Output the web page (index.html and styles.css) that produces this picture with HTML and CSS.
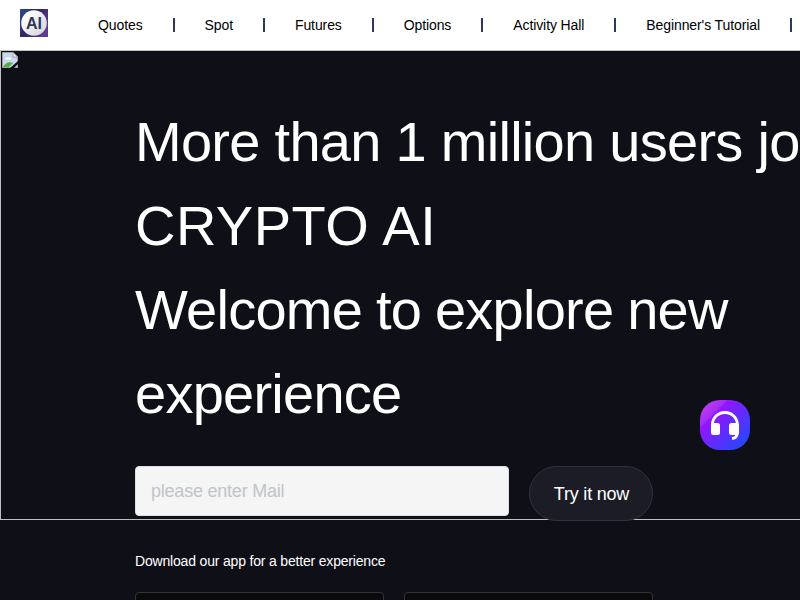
FILE: index.html
```
<!DOCTYPE html>
<html lang="en">
<head>
    <meta charset="UTF-8">
    <meta name="viewport" content="width=device-width, initial-scale=1.0">
    <title>CRYPTO AI</title>
    <link rel="stylesheet" href="styles.css">
</head>
<body>
    <header class="header">
        <svg class="logo" viewBox="0 0 28 28">
            <defs>
                <linearGradient id="logoBg" x1="0" y1="0" x2="1" y2="0.6">
                    <stop offset="0" stop-color="#2b4a94"/>
                    <stop offset="0.5" stop-color="#30265f"/>
                    <stop offset="1" stop-color="#5b3a9a"/>
                </linearGradient>
                <linearGradient id="logoDisc" x1="0" y1="0" x2="1" y2="1">
                    <stop offset="0.2" stop-color="#ffffff"/>
                    <stop offset="1" stop-color="#cfcfd6"/>
                </linearGradient>
            </defs>
            <rect width="28" height="28" fill="url(#logoBg)"/>
            <circle cx="14" cy="14" r="12.8" fill="url(#logoDisc)"/>
            <text class="logo-text" x="14" y="19.8" text-anchor="middle">AI</text>
        </svg>
        <nav class="nav">
            <a class="nav-item">Quotes</a>
            <a class="nav-item">Spot</a>
            <a class="nav-item">Futures</a>
            <a class="nav-item">Options</a>
            <a class="nav-item">Activity Hall</a>
            <a class="nav-item">Beginner's Tutorial</a>
        </nav>
    </header>

    <main class="hero">
        <div class="banner">
            <svg class="banner-icon" viewBox="0 0 16 16">
                <path d="M0.5 0.5H11L15.5 5V15.5H0.5Z" fill="#c6d8f5" stroke="#a0a0a0"/>
                <path d="M11 0.5V5H15.5Z" fill="#fff" stroke="#a0a0a0"/>
                <path d="M3 7.5a2 2 0 0 1 3-2a2 2 0 0 1 3 2Z" fill="#fff"/>
                <path d="M1 15C3 11 7 9 11 11L7 15Z" fill="#53b13e"/>
                <path d="M8 16L16 9V12L12 16Z" fill="#0f0f18"/>
            </svg>
        </div>

        <div class="content">
            <h1 class="title">More than 1 million users join<br><span class="brand">CRYPTO AI</span></h1>
            <h1 class="title welcome">Welcome to explore new<br>experience</h1>

            <div class="form">
                <input class="mail" type="text" placeholder="please enter Mail">
                <button class="try">Try it now</button>
            </div>

            <p class="download">Download our app for a better experience</p>
            <div class="apps">
                <div class="app"></div>
                <div class="app"></div>
            </div>
        </div>
    </main>

    <svg class="service" viewBox="0 0 50 50">
        <defs>
            <linearGradient id="serviceBg" x1="0.1" y1="0.1" x2="0.9" y2="0.9">
                <stop offset="0" stop-color="#bd3df2"/>
                <stop offset="0.2" stop-color="#a62cf5"/>
                <stop offset="0.24" stop-color="#9315ff"/>
                <stop offset="1" stop-color="#2448ff"/>
            </linearGradient>
        </defs>
        <rect width="50" height="50" rx="20" fill="url(#serviceBg)"/>
        <path d="M12.400 26V24.800a12.500 12.300 0 0 1 25 0V32Q37.500 38 32 38.500" fill="none" stroke="#fff" stroke-width="2.800"/>
        <rect x="11" y="23" width="9" height="12" rx="2.500" fill="#fff"/>
        <rect x="29" y="23" width="9.900" height="12" rx="2.500" fill="#fff"/>
    </svg>
</body>
</html>
```

FILE: styles.css
```
* {
    box-sizing: border-box;
}
body {
    margin: 0;
    height: 600px;
    overflow: hidden;
    background: #0f0f18;
    color: #fff;
    font-family: "Liberation Sans", Arial, sans-serif;
}
.header {
    display: flex;
    align-items: center;
    height: 50px;
    padding-left: 20px;
    background: #fff;
}
.logo {
    flex: none;
    width: 28px;
    height: 28px;
    margin-top: -4px;
}
.logo-text {
    font-size: 16px;
    font-weight: bold;
    fill: #34365a;
}
.nav {
    display: flex;
    margin-left: 20px;
}
.nav-item {
    flex: none;
    padding: 0 30px;
    border-right: 2px solid #30365f;
    color: #000;
    font-size: 14px;
    line-height: 14px;
    letter-spacing: -0.1px;
    white-space: nowrap;
}
.hero {
    position: relative;
}
/* banner frame lies behind the hero content */
.banner {
    position: absolute;
    top: 0;
    left: 0;
    width: 100%;
    height: 470px;
    padding: 1px;
    border: 1px solid #c0c0c0;
    border-right: none;
}
.banner-icon {
    display: block;
    width: 16px;
    height: 16px;
}
.content {
    position: relative;
    padding: 50px 0 0 135px;
}
.title {
    margin: 0;
    font-size: 56px;
    font-weight: normal;
    line-height: 84px;
    letter-spacing: -0.72px;
    white-space: nowrap;
}
.brand {
    letter-spacing: 0.5px;
}
.welcome {
    letter-spacing: -0.75px;
    word-spacing: -1px;
}
.form {
    display: flex;
    align-items: flex-start;
    gap: 20px;
    margin-top: 30px;
}
.mail {
    width: 374px;
    height: 50px;
    padding: 0 15px;
    border: 1px solid #dcdfe6;
    border-radius: 4px;
    background: #f5f5f5;
    font-family: inherit;
    font-size: 18px;
    letter-spacing: -0.22px;
}
.mail::placeholder {
    color: #c0c4cc;
}
.try {
    width: 124px;
    height: 55px;
    padding: 1px 0 0 1px;
    border: 1px solid #32323e;
    border-radius: 28px;
    background: #1c1c26;
    color: #fff;
    font-family: inherit;
    font-size: 18px;
    letter-spacing: -0.2px;
}
.download {
    margin: 30px 0 21px;
    font-size: 14px;
    line-height: 20px;
    letter-spacing: -0.18px;
}
.apps {
    display: flex;
    gap: 20px;
}
.app {
    width: 249px;
    height: 60px;
    border: 1px solid #32323e;
    border-radius: 4px;
    background: #0a0a0b;
}
.service {
    position: fixed;
    left: 700px;
    top: 400px;
    width: 50px;
    height: 50px;
}
```
